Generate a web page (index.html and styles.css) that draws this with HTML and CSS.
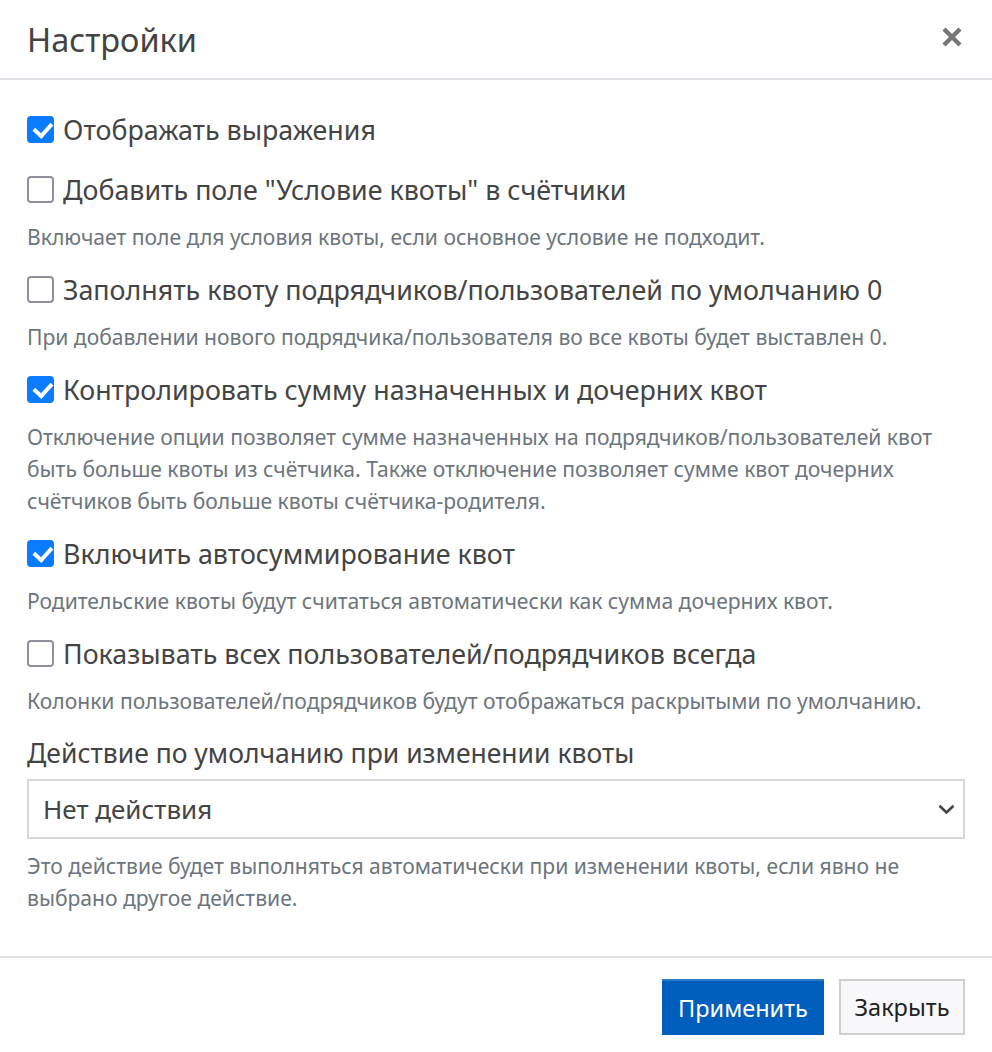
FILE: index.html
```html
<!DOCTYPE html>
<html>
<head>
  <title>Настройки</title>
  <link rel="stylesheet" href="styles.css">
</head>
<body>
  <div class="modal">
    <div class="modal-header">
      <h1 class="modal-title">Настройки</h1>
      <button class="close-btn" aria-label="Закрыть">
        <svg width="22" height="22" viewBox="0 0 22 22"><path d="M3 3 L19 19 M19 3 L3 19" stroke="#777" stroke-width="4.5" stroke-linecap="butt"/></svg>
      </button>
    </div>

    <div class="modal-body">
      <div class="option first">
        <label class="check-row"><span class="box checked"></span>Отображать выражения</label>
      </div>
      <div class="option">
        <label class="check-row"><span class="box"></span>Добавить поле "Условие квоты" в счётчики</label>
        <p class="hint">Включает поле для условия квоты, если основное условие не подходит.</p>
      </div>
      <div class="option">
        <label class="check-row"><span class="box"></span>Заполнять квоту подрядчиков/пользователей по умолчанию 0</label>
        <p class="hint">При добавлении нового подрядчика/пользователя во все квоты будет выставлен 0.</p>
      </div>
      <div class="option">
        <label class="check-row"><span class="box checked"></span>Контролировать сумму назначенных и дочерних квот</label>
        <p class="hint">Отключение опции позволяет сумме назначенных на подрядчиков/пользователей квот быть больше квоты из счётчика. Также отключение позволяет сумме квот дочерних счётчиков быть больше квоты счётчика-родителя.</p>
      </div>
      <div class="option">
        <label class="check-row"><span class="box checked"></span>Включить автосуммирование квот</label>
        <p class="hint">Родительские квоты будут считаться автоматически как сумма дочерних квот.</p>
      </div>
      <div class="option">
        <label class="check-row"><span class="box"></span>Показывать всех пользователей/подрядчиков всегда</label>
        <p class="hint">Колонки пользователей/подрядчиков будут отображаться раскрытыми по умолчанию.</p>
      </div>

      <div class="field">
        <div class="field-label">Действие по умолчанию при изменении квоты</div>
        <div class="select">
          <span>Нет действия</span>
          <svg width="17" height="11" viewBox="0 0 17 11"><path d="M1.5 1.8 L8.5 8.5 L15.5 1.8" fill="none" stroke="#444" stroke-width="2.6"/></svg>
        </div>
        <p class="hint">Это действие будет выполняться автоматически при изменении квоты, если явно не выбрано другое действие.</p>
      </div>
    </div>

    <div class="modal-footer">
      <button class="btn btn-primary">Применить</button>
      <button class="btn btn-light">Закрыть</button>
    </div>
  </div>
</body>
</html>
```

FILE: styles.css
```css
body {
  margin: 0;
  background: #fff;
  font-family: "Noto Sans", "Open Sans", sans-serif;
  color: #444;
}

.modal-header {
  height: 78px;
  display: flex;
  align-items: center;
  justify-content: space-between;
  padding: 0 29px 0 27px;
  border-bottom: 2px solid #dee2e6;
}

.modal-title {
  margin: 0;
  font-size: 32.5px;
  font-weight: 400;
  color: #444;
}

.close-btn {
  border: none;
  background: none;
  padding: 0;
  display: flex;
  margin-top: -4px;
}

.modal-body {
  padding: 31px 27px 42px;
}

.option {
  margin-bottom: 18px;
}

.option.first {
  margin-bottom: 24px;
}

.check-row {
  display: flex;
  align-items: center;
  height: 36px;
  font-size: 26.8px;
}

.box {
  width: 27px;
  height: 27px;
  box-sizing: border-box;
  border: 2px solid #8f8f9d;
  border-radius: 4px;
  margin-right: 9px;
  flex-shrink: 0;
  position: relative;
}

.box.checked {
  background: #0b7bfe;
  border-color: #0b7bfe;
}

.box.checked::after {
  content: "";
  position: absolute;
  left: 7.5px;
  top: 1px;
  width: 7.5px;
  height: 14px;
  border: solid #fff;
  border-width: 0 4px 4px 0;
  transform: rotate(42deg);
}

.hint {
  margin: 14px 0 0;
  font-size: 21.1px;
  line-height: 32px;
  color: #6c757d;
}

.field-label {
  font-size: 26.5px;
  height: 36px;
  display: flex;
  align-items: center;
  margin-bottom: 8px;
}

.select {
  height: 60px;
  box-sizing: border-box;
  border: 2px solid #d3d6db;
  display: flex;
  align-items: center;
  justify-content: space-between;
  padding: 0 8px 0 14px;
  font-size: 26px;
}

.field .hint {
  margin-top: 11px;
}

.modal-footer {
  border-top: 2px solid #dee2e6;
  display: flex;
  justify-content: flex-end;
  gap: 15px;
  padding: 21px 27px 17px;
}

.btn {
  height: 56px;
  font-family: inherit;
  font-size: 23.5px;
  padding: 0 10px;
  cursor: pointer;
}

.btn-primary {
  background: #005ebd;
  color: #fff;
  border: none;
  border-top: 2px solid #2a78c8;
  width: 162px;
}

.btn-light {
  background: #f8f8fa;
  color: #222;
  border: 2px solid #cfcfcf;
  width: 126px;
}
```
